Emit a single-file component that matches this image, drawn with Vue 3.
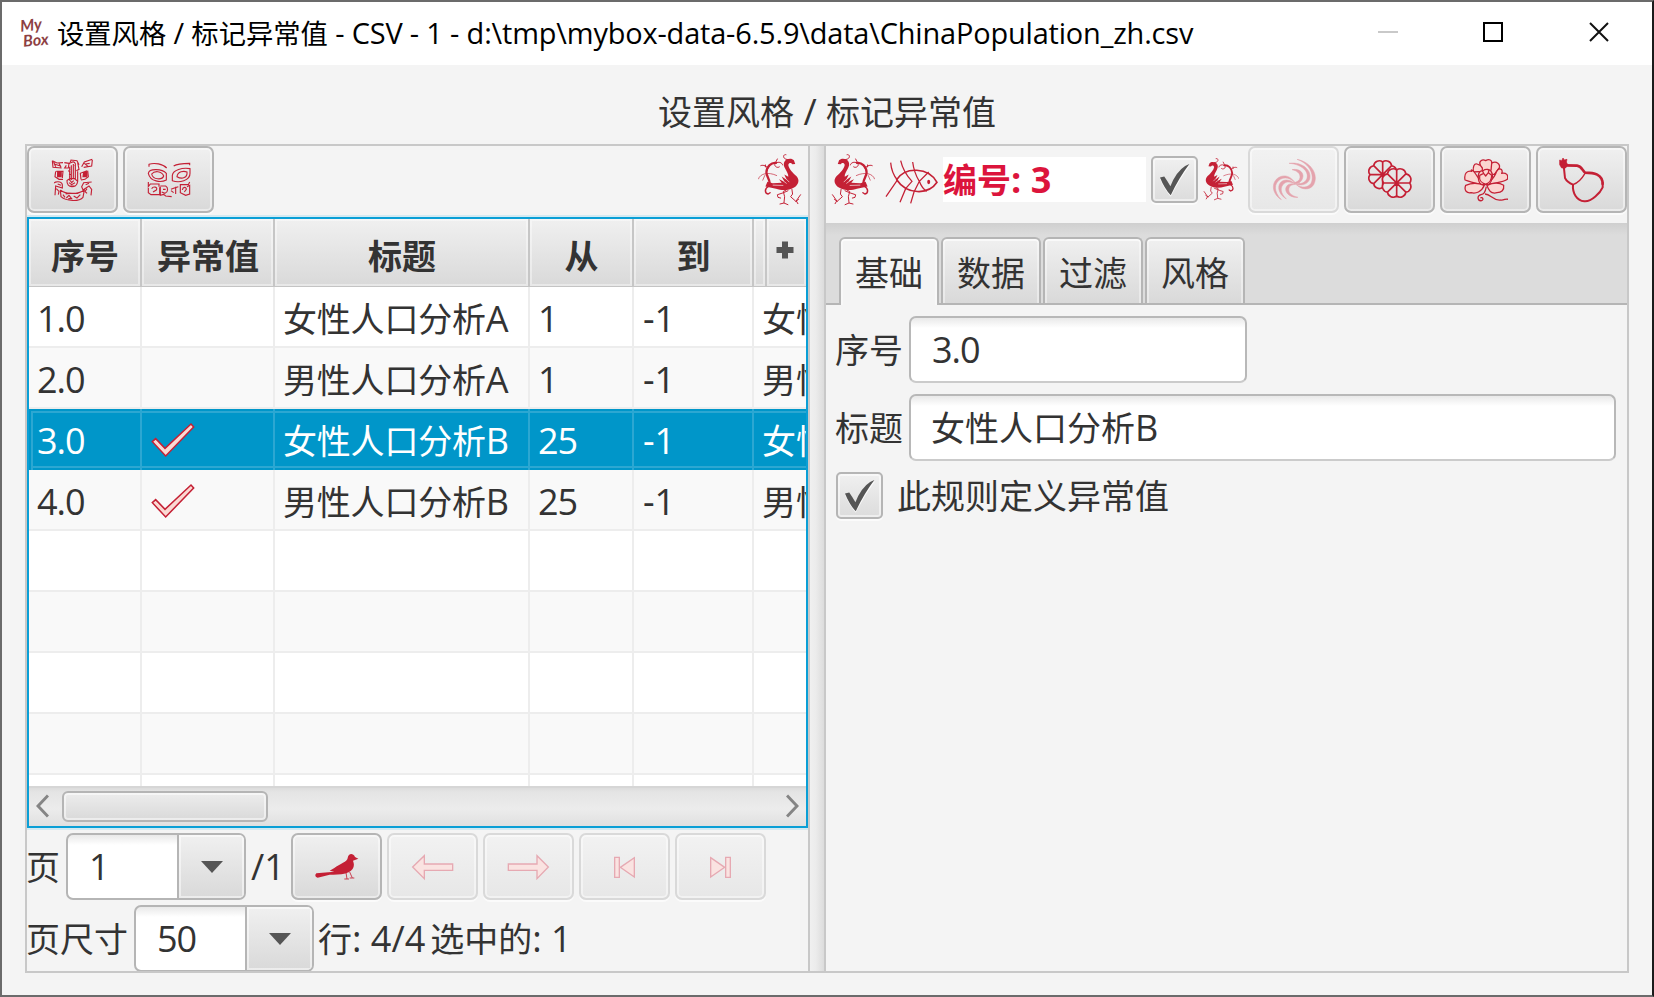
<script setup>
import { h } from 'vue'

const Txt = (props) =>
  h(
    'span',
    { class: 'txt' },
    (props.t.match(/[\u2e80-\u9fff]+|[^\u2e80-\u9fff]+/g) || []).map((s) =>
      h('span', { class: /[\u2e80-\u9fff]/.test(s) ? 'han' : 'lat' }, s)
    )
  )
Txt.props = ['t']

const cols = [
  { t: '序号', c: 'c1' },
  { t: '异常值', c: 'c2' },
  { t: '标题', c: 'c3' },
  { t: '从', c: 'c4' },
  { t: '到', c: 'c5' }
]
const rows = [
  { n: '1.0', x: false, t: '女性人口分析A', a: '1', b: '-1', f: '女性' },
  { n: '2.0', x: false, t: '男性人口分析A', a: '1', b: '-1', f: '男性' },
  { n: '3.0', x: true, t: '女性人口分析B', a: '25', b: '-1', f: '女性', sel: true },
  { n: '4.0', x: true, t: '男性人口分析B', a: '25', b: '-1', f: '男性' },
  {}, {}, {}, {}, {}
]
const tabs = ['基础', '数据', '过滤', '风格']

function rosette(cx, cy, r, a) {
  const p = []
  for (let i = 0; i < 8; i++) {
    const g = ((i * 45 + a) * Math.PI) / 180
    p.push([cx + r * Math.cos(g), cy + r * Math.sin(g)])
  }
  let d = `M${p[0].join(' ')}`
  for (let i = 1; i <= 8; i++) d += ` A${r * 0.44} ${r * 0.44} 0 0 1 ${p[i % 8].join(' ')}`
  for (let i = 0; i < 4; i++) d += ` M${p[i].join(' ')} L${p[i + 4].join(' ')}`
  return d
}
const flowerBack = rosette(577, 108, 38, 0)
const flowerFront = rosette(619, 133, 39, 0)
</script>

<template>
  <div class="window">
    <header class="titlebar">
      <svg class="logo" width="34" height="38" viewBox="0 0 34 38">
        <text x="0" y="18" transform="rotate(-6 8 12)">My</text>
        <text x="3" y="33" transform="rotate(-5 12 28)">Box</text>
      </svg>
      <div class="caption"><Txt t="设置风格 / 标记异常值 - CSV - 1 - d:\tmp\mybox-data-6.5.9\data\ChinaPopulation_zh.csv" /></div>
      <svg class="sys" width="240" height="22" viewBox="0 0 240 22">
        <path d="M0 11H20" stroke="#c9c9c9" stroke-width="2" />
        <rect x="106" y="2" width="18" height="18" fill="none" stroke="#000" stroke-width="2" />
        <path d="M212 2L230 20M230 2L212 20" stroke="#111" stroke-width="2" />
      </svg>
    </header>

    <h1 class="heading"><Txt t="设置风格 / 标记异常值" /></h1>

    <main class="split">
      <section class="left">
        <div class="toolbar">
          <button class="btn">
            <svg width="44" height="44" viewBox="106 444 132 132" class="ink fine">
              <path d="M110 452L112 472L138 474M110 452L124 459L142 458M116 462L134 468M114 456L120 470M130 460L136 472M146 458L160 460L158 474L147 474L152 466M162 462L166 450L184 452L190 464M166 458C176 452 182 460 178 468M186 458L190 478L182 482M198 470L206 456L230 448M204 472L228 468L230 450M210 462L222 460M206 460L218 470" />
              <path d="M162 470V512M167 466V510M173 462V508M179 466V510M186 484V514M158 484L164 478M160 496L168 492M154 512C152 536 184 536 186 514L176 506H162ZM160 518L168 524L178 518M160 528H180M164 512L168 518L174 512" />
              <path d="M120 484L118 500L130 508H142M122 484H142L140 504M128 486H136V500H126ZM216 482L218 500L208 508L196 510M196 508L194 490L214 482M204 486H212V500H202Z" />
              <path class="dot" d="M126 488h10v10h-10ZM204 488h10v10h-10Z" />
              <path d="M116 520C116 514 138 512 140 524V534L120 528L118 556M122 536L130 544L128 554M126 522L136 526M228 516L204 518L198 530L202 540L220 528L228 538L226 556M214 536L208 544L214 550M210 524L220 520" />
              <path d="M134 540L136 560C152 574 190 576 202 562L206 540C188 554 150 554 134 540M142 554L148 562M152 564L160 556L168 566H158M174 558L184 564L194 554M150 552L160 550H188" />
            </svg>
          </button>
          <button class="btn">
            <svg width="44" height="44" viewBox="394 444 132 132" class="ink">
              <path d="M400 470V463C416 457 442 462 453 474M474 468C486 460 500 460 522 460V466" />
              <path d="M398 490C400 474 440 476 452 490V510C436 518 404 516 398 490ZM408 492C416 482 438 482 444 498C440 510 412 510 408 492Z" />
              <path d="M523 476C500 472 472 480 470 496V512C490 520 524 512 523 490ZM484 500C486 484 504 482 514 486C516 502 500 510 484 500Z" />
              <path d="M398 516V530L404 522H430V530M408 536C412 528 428 530 422 540L412 546M398 534V548L406 554H432V532M434 528H450C458 532 458 546 448 550L438 546M442 538H450M434 530V556L444 553L450 558L468 560" />
              <path d="M522 516L518 524H494V530M514 530L522 526V552L510 556L494 548V530M500 540C502 530 512 530 512 538L506 546M466 538L476 534L488 530M466 542L474 548M480 530V552" />
            </svg>
          </button>
          <svg class="bird flip" width="44" height="53" viewBox="274 40 132 160"><use href="#bird" /></svg>
        </div>

        <div class="table">
          <div class="thead">
            <div v-for="c in cols" :key="c.c" class="th" :class="c.c">{{ c.t }}</div>
            <div class="th sliver"></div>
            <div class="th plus">
              <svg width="18" height="18" viewBox="0 0 18 18"><path d="M6 0.500H12V6H17.500V12H12V17.500H6V12H0.500V6H6Z" fill="#555" /></svg>
            </div>
          </div>
          <div class="tbody">
            <div v-for="(r, i) in rows" :key="i" class="tr" :class="{ odd: i % 2, sel: r.sel }">
              <div class="td num c1"><Txt v-if="r.n" :t="r.n" /></div>
              <div class="td c2">
                <svg v-if="r.x" class="mark" width="44" height="36" viewBox="451 635 132 108">
                  <path d="M455 694L465 685L493 714L571 641L579 650L495 737Z" />
                </svg>
              </div>
              <div class="td c3"><Txt v-if="r.t" :t="r.t" /></div>
              <div class="td num c4"><Txt v-if="r.a" :t="r.a" /></div>
              <div class="td c5"><Txt v-if="r.b" :t="r.b" /></div>
              <div class="td c6"><Txt v-if="r.f" :t="r.f" /></div>
            </div>
          </div>
          <div class="scroll">
            <svg width="13" height="24" viewBox="0 0 13 24"><path d="M12 1.5L2 12L12 22.5" /></svg>
            <div class="thumb"></div>
            <svg class="end" width="13" height="24" viewBox="0 0 13 24"><path d="M1 1.5L11 12L1 22.5" /></svg>
          </div>
        </div>

        <div class="pager">
          <Txt t="页" />
          <div class="combo"><div class="val num"><Txt t="1" /></div><div class="drop"><i></i></div></div>
          <span class="total"><Txt t="/1" /></span>
          <button class="btn">
            <svg width="44" height="44" viewBox="944 223 132 132">
              <path fill="#c42035" d="M1074 264L1064 259C1058 246 1044 248 1042 262C1042 273 1018 280 1002 292L988 300L1002 303L948 308C943 312 944 320 952 321L988 312C1005 313 1030 312 1045 305C1060 297 1064 285 1058 270Z" />
              <path fill="none" stroke="#c42035" stroke-width="2.5" d="M1037 306L1040 325H1032M1040 325H1046M1048 304L1056 322H1048M1056 322H1062" />
            </svg>
          </button>
          <button class="btn off">
            <svg width="44" height="44" viewBox="33 223 132 132" class="nav"><path d="M38 289L73 255V280H158V299H73V324Z" /></svg>
          </button>
          <button class="btn off">
            <svg width="44" height="44" viewBox="321 223 132 132" class="nav"><path d="M325 280H411V255L445 289L411 324V299H325Z" /></svg>
          </button>
          <button class="btn off">
            <svg width="44" height="44" viewBox="609 223 132 132" class="nav"><path d="M644 260H658V320H644ZM661 290L703 261V319Z" /></svg>
          </button>
          <button class="btn off">
            <svg width="44" height="44" viewBox="897 223 132 132" class="nav"><path d="M932 261L974 290L932 319ZM977 260H991V320H977Z" /></svg>
          </button>
        </div>
        <div class="pager">
          <Txt t="页尺寸" />
          <div class="combo"><div class="val num"><Txt t="50" /></div><div class="drop"><i></i></div></div>
          <Txt t="行: 4/4" />
          <span class="picked"><Txt t="选中的: 1" /></span>
        </div>
      </section>

      <div class="divider"></div>

      <section class="right">
        <div class="toolbar rt">
          <svg class="bird" width="44" height="53" viewBox="274 40 132 160">
            <g id="bird">
              <path fill="#c42035" d="M294 73L298 62C303 56 313 56 321 60C330 66 330 76 325 86C320 96 314 104 315 112L327 105L320 121L335 111L327 126L343 119L335 130L362 131L378 127L384 141L352 148C335 154 312 153 299 145C283 136 280 121 290 110C301 100 313 88 315 76C313 68 306 69 303 74Z" />
              <g fill="none" stroke="#f4f4f4" stroke-width="2"><path d="M312 128L326 114M320 132L336 120M330 138L362 137" /></g>
              <g fill="none" stroke="#c42035" stroke-linecap="round">
                <path stroke-width="7" d="M352 70C366 68 380 80 381 98C381 112 372 116 371 132" />
                <path stroke-width="3" d="M315 60C334 60 332 42 322 45M332 76C334 68 344 66 352 70C362 76 350 88 342 82M348 58L354 70M376 86C384 76 394 76 398 78M384 82V76" />
                <path stroke-width="2" d="M350 108C376 96 400 102 405 118M386 108L392 122" />
                <path stroke-width="4.500" d="M374 140C388 148 386 162 376 164L370 160" />
                <path stroke-width="3" d="M322 152L330 156L326 172L328 190M316 196L328 191L340 194M316 154L330 160L348 166L346 174L338 176M304 150L302 164L308 172L292 186L284 180M292 186L278 166M290 186L286 193" />
              </g>
            </g>
          </svg>
          <svg class="fish" width="54" height="44" viewBox="435 58 162 132" fill="none" stroke="#c42035" stroke-width="3.800">
            <path stroke-width="5" d="M470 117C495 78 565 78 591 125C565 164 500 162 470 117Z" />
            <path d="M452 66C454 90 462 106 472 118L438 168M482 60C487 82 497 102 516 122L497 144L480 185M518 64C521 88 528 106 538 122C544 138 550 146 560 152M566 94L538 122L522 154L512 188" />
            <ellipse cx="566" cy="124" rx="4.500" ry="6.500" fill="#c42035" stroke="none" />
          </svg>
          <div class="number"><Txt t="编号: 3" /></div>
          <span class="check"><svg width="30" height="34" viewBox="75 806 92 102"><path fill="#fafafa" d="M75 854L88 850Q98 864 107 880Q128 838 156 817L167 812Q135 855 108 908Q88 886 75 854" /><path fill="#555" d="M75 849L88 846Q98 860 107 876Q124 832 152 814L165 808Q132 852 108 904Q88 882 75 849" /></svg></span>
          <svg class="bird small" width="36" height="44" viewBox="274 40 132 160"><use href="#bird" /></svg>
          <button class="btn off">
            <svg width="44" height="44" viewBox="245 54 132 132" fill="#e4a3ad" stroke="#e4a3ad" stroke-width="1.500">
              <path d="M320 58C362 66 386 104 370 134C358 152 334 150 318 134C336 144 352 144 362 130C374 104 356 70 320 58Z" />
              <path d="M296 70C336 64 366 92 358 118C350 136 330 138 314 131C332 132 344 130 350 115C356 92 330 72 296 70Z" />
              <path d="M305 89C328 84 344 100 336 117C330 130 320 132 310 129C320 126 328 122 329 112C330 100 320 92 305 89Z" />
              <path d="M273 179C243 160 242 126 266 112C284 102 302 110 314 128C300 114 284 110 270 118C250 130 250 156 273 179Z" />
              <path d="M288 177C260 160 260 132 276 123C290 116 304 122 314 131C300 126 290 124 282 130C268 142 270 160 288 177Z" />
              <path d="M323 172C296 174 280 154 288 140C294 130 306 130 316 133C306 134 298 136 296 144C292 158 304 168 323 172Z" />
            </svg>
          </button>
          <button class="btn">
            <svg width="44" height="44" viewBox="533 58 132 132" stroke="#c42035" stroke-width="5" fill="#e6e6e6">
              <path :d="flowerBack" /><path :d="flowerFront" />
            </svg>
          </button>
          <button class="btn">
            <svg width="44" height="44" viewBox="131 54 132 132" stroke="#c42035" stroke-width="3.800" fill="#fbd5d0" stroke-linejoin="round">
              <path d="M180 76C174 64 186 56 196 62C206 56 216 60 214 70C228 60 242 74 236 86L222 104L186 96Z" />
              <path d="M186 94L160 96C156 80 162 70 170 72L180 76L186 84ZM212 92L214 70M222 104L236 84" />
              <path d="M190 132C170 134 146 124 134 120C130 98 142 92 154 94C150 84 160 92 166 102C172 114 184 122 190 132Z" />
              <path d="M200 134C222 128 250 128 261 118C265 104 258 98 244 100C250 88 236 80 228 96C224 112 210 122 200 134Z" />
              <path d="M192 136C172 128 150 130 136 136C130 152 140 160 152 158C166 162 184 156 192 136Z" />
              <path d="M200 136C218 128 238 128 250 136C252 150 244 158 230 158C216 162 206 156 200 136Z" />
              <path d="M176 124C170 104 176 92 188 92C196 86 210 88 212 94C220 104 216 126 204 134H190C182 134 178 130 176 124Z" />
              <path d="M178 106L190 100L196 108L204 98L214 106C214 120 206 130 196 132C184 130 176 120 178 106M186 92L190 100M204 98L206 90" />
              <path fill="none" d="M198 140C194 160 190 162 182 164C168 168 172 184 184 182C192 178 186 170 180 174M194 162C212 162 216 182 240 180C252 182 256 174 264 178" />
            </svg>
          </button>
          <button class="btn">
            <svg width="46" height="46" viewBox="416 49 138 138" fill="none" stroke="#c42035" stroke-linejoin="round">
              <path stroke-width="8" d="M432 74L470 75C482 76 486 88 494 96C520 96 548 100 547 132" />
              <path stroke-width="6" d="M430 74L434 112C440 124 448 128 458 132C456 156 468 180 492 182C514 184 540 156 547 140V124" />
              <path stroke-width="4" d="M458 132C474 126 486 112 494 98" />
              <path fill="#c42035" stroke-width="2" d="M418 58L424 60L428 52L432 58L440 56L438 64L442 72L436 82H424L418 72Z" />
            </svg>
          </button>
        </div>

        <div class="tabbar">
          <div v-for="(t, i) in tabs" :key="t" class="tab" :class="{ on: i === 0 }"><Txt :t="t" /></div>
        </div>
        <div class="form">
          <label class="field"><Txt t="序号" /><span class="input short num"><Txt t="3.0" /></span></label>
          <label class="field"><Txt t="标题" /><span class="input"><Txt t="女性人口分析B" /></span></label>
          <label class="field last">
            <span class="check"><svg width="30" height="34" viewBox="75 806 92 102"><path fill="#fafafa" d="M75 854L88 850Q98 864 107 880Q128 838 156 817L167 812Q135 855 108 908Q88 886 75 854" /><path fill="#555" d="M75 849L88 846Q98 860 107 876Q124 832 152 814L165 808Q132 852 108 904Q88 882 75 849" /></svg></span>
            <Txt t="此规则定义异常值" />
          </label>
        </div>
      </section>
    </main>
  </div>
</template>

<style>
body { background: #6b6b6b; overflow: hidden; }
.txt { white-space: pre; line-height: 1; font-size: 34px; display: inline-block; margin: 0 1px 0 -1px; }
.txt .han { font-family: "Noto Sans CJK SC", sans-serif; }
.txt .lat { font-family: "Open Sans", sans-serif; font-size: 1.06em; line-height: 1; }
.num .txt .lat { letter-spacing: -1px; }
.caption .txt .lat { letter-spacing: -.16px; }
</style>

<style scoped>
* { box-sizing: border-box; }
.window {
  width: 1654px; height: 997px; display: flex; flex-direction: column;
  background: #f4f4f4; border: 2px solid #6b6b6b; border-right-color: #1b1b1b;
  color: #333; font: 34px/1 "Open Sans", "Noto Sans CJK SC", sans-serif;
}
.titlebar { height: 63px; flex: none; background: #fff; display: flex; align-items: center; padding: 0 34px 0 18px; color: #000; }
.logo { flex: none; margin-top: -3px; overflow: visible; }
.logo text { font: italic 700 16px "Lato", sans-serif; fill: #8d3f43; }
.caption { margin-left: 4px; margin-top: -5px; }
.caption .txt { font-size: 27.3px; }
.sys { margin-left: auto; margin-top: -3px; }
.heading { margin: 0; height: 79px; flex: none; display: flex; align-items: center; justify-content: center; padding: 14px 0 0 2px; font-weight: 400; }
.split { height: 829px; margin: 0 23px; border: 2px solid #c8c8c8; display: flex; flex: none; }
.left { width: 781px; display: flex; flex-direction: column; flex: none; overflow: hidden; }
.divider { width: 18px; flex: none; border: 2px solid #c8c8c8; border-width: 0 2px; background: linear-gradient(90deg, #f0f0f0, #ececec 40%, #dcdcdc); }
.right { flex: 1; min-width: 0; display: flex; flex-direction: column; }
.toolbar { height: 71px; flex: none; display: flex; align-items: flex-start; gap: 5px; }
.btn {
  width: 91px; height: 67px; flex: none; padding: 0; border: 2px solid #b5b5b5; border-radius: 7px;
  background: linear-gradient(#f0f0f0, #d9d9d9); box-shadow: inset 0 0 0 2px rgba(255, 255, 255, .45), 0 2px 0 #fbfbfb;
  display: flex; align-items: center; justify-content: center;
}
.btn.off { border-color: #d9d9d9; background: linear-gradient(#f2f2f2, #e7e7e7); }
.ink { fill: none; stroke: #c42035; stroke-width: 3.4; }
.fine { stroke-width: 3.4; }
.dot { fill: #c42035; }
.bird { flex: none; margin-top: 7px; }
.flip { transform: scaleX(-1); margin-left: auto; margin-right: 6px; }
.table { height: 611px; flex: none; border: 2px solid #0a9fd6; background: #fff; box-shadow: 0 0 0 2px #d3eaf2; display: flex; flex-direction: column; width: 781px; overflow: hidden; }
.thead { height: 68px; flex: none; display: flex; border-bottom: 1px solid #c4c4c4; }
.th {
  flex: none; border-right: 2px solid #c6c6c6; display: flex; align-items: center; justify-content: center; padding: 5px 0 0 1px;
  font: 700 34px/1 "Noto Sans CJK SC", sans-serif; background: linear-gradient(#f0f0f0, #d9d9d9);
  box-shadow: inset 0 0 0 2px rgba(255, 255, 255, .4);
}
.c1 { width: 113px; } .c2 { width: 133px; } .c3 { width: 255px; } .c4 { width: 104px; } .c5 { width: 120px; } .c6 { width: 54px; }
.sliver { width: 13px; }
.plus { flex: 1; border: 0; padding: 0 4px 5px 0; }
.tbody { height: 499px; flex: none; overflow: hidden; display: flex; flex-direction: column; }
.tr { height: 61px; flex: none; display: flex; background: #fff; border-bottom: 2px solid #ededed; }
.tr.odd { background: #f9f9f9; }
.td { flex: none; border-right: 2px solid #ededed; padding-left: 9px; display: flex; align-items: center; overflow: hidden; padding-top: 3px; }
.td.c3 .txt { letter-spacing: -.2px; }
.td.c5 { padding-left: 10px; }
.td.c6 { border: 0; }
.mark { margin: -1px 0 0 0; }
.mark path { fill: #fbd9d3; stroke: #c42035; stroke-width: 4.6; }
.tr.sel { background: #0096c9; color: #fff; border-bottom: 0; box-shadow: inset 2px 2px 0 #0096c9, inset 4px 4px 0 #2ca7d2, inset 0 -2px 0 #0096c9, inset 0 -4px 0 #2ca7d2; }
.tr.sel .td { border-right-color: #2ca7d2; padding-bottom: 2px; }
.scroll { flex: 1; display: flex; align-items: center; background: linear-gradient(#dcdcdc, #e4e4e4 10%, #ececec 55%, #e0e0e0); padding: 0 7px 2px; border-top: 2px solid #d6d6d6; }
.scroll path { fill: none; stroke: #858585; stroke-width: 3; }
.thumb { width: 206px; height: 31px; margin-left: 13px; border: 2px solid #b5b5b5; border-radius: 6px; background: linear-gradient(#ededed, #d9d9d9); box-shadow: inset 0 0 0 2px rgba(255, 255, 255, .5); }
.end { margin-left: auto; }
.pager { height: 67px; flex: none; margin-top: 5px; display: flex; align-items: center; gap: 5px; }
.combo { width: 180px; height: 67px; flex: none; border: 2px solid #b5b5b5; border-radius: 7px; display: flex; overflow: hidden; background: linear-gradient(#e9e9e9, #fff 10px); }
.val { width: 109px; padding: 0 0 0 22px; display: flex; align-items: center; }
.drop { flex: 1; border-left: 2px solid #b5b5b5; background: linear-gradient(#f0f0f0, #d9d9d9); box-shadow: inset 0 0 0 2px rgba(255, 255, 255, .5); display: flex; align-items: center; justify-content: center; }
.drop i { border: 11px solid transparent; border-top: 12px solid #555; border-bottom: 0; }
.total { width: 35px; padding-left: 1px; }
.nav path { fill: #fae3e1; stroke: #e6a9b2; stroke-width: 4; }
.rt { height: 77px; padding-left: 5px; gap: 0; }
.fish { margin: 14px 4px 0 10px; flex: none; }
.number { width: 203px; height: 45px; margin-top: 11px; padding-left: 1px; background: #fff; color: #dc143c; font-weight: 700; display: flex; align-items: center; flex: none; }
.check { width: 47px; height: 47px; flex: none; border: 2px solid #b5b5b5; border-radius: 5px; background: linear-gradient(#f0f0f0, #dcdcdc); box-shadow: inset 0 0 0 2px rgba(255, 255, 255, .5), 0 2px 0 #fbfbfb; display: flex; align-items: center; justify-content: center; }
.rt .check { margin: 10px 5px 0; }
.small { margin-top: 11px; margin-right: 9px; }
.rt .btn + .btn { margin-left: 5px; }
.tabbar { height: 82px; flex: none; display: flex; align-items: flex-end; gap: 2px; padding-left: 13px; border-bottom: 2px solid #b5b5b5; background: linear-gradient(#cfcfcf, #dcdcdc 12px); }
.tab { width: 100px; height: 66px; border: 2px solid #b5b5b5; border-bottom: 0; border-radius: 6px 6px 0 0; background: linear-gradient(#f0f0f0, #d9d9d9); box-shadow: inset 0 2px 0 rgba(255, 255, 255, .6), inset 2px 0 0 rgba(255, 255, 255, .4), inset -2px 0 0 rgba(255, 255, 255, .4); display: flex; align-items: center; justify-content: center; padding: 3px 0 0 2px; }
.tab.on { background: #f4f4f4; height: 68px; margin-bottom: -2px; padding-bottom: 2px; }
.form { padding: 11px 11px 0 10px; display: flex; flex-direction: column; gap: 11px; }
.field { display: flex; align-items: center; gap: 5px; }
.input { flex: 1; height: 67px; border: 2px solid #b8b8b8; border-bottom-color: #cbcbcb; border-radius: 7px; background: linear-gradient(#e9e9e9, #fff 10px); padding: 0 0 0 21px; display: flex; align-items: center; }
.input.short { flex: none; width: 338px; padding-left: 22px; }
.last { gap: 15px; }
</style>
